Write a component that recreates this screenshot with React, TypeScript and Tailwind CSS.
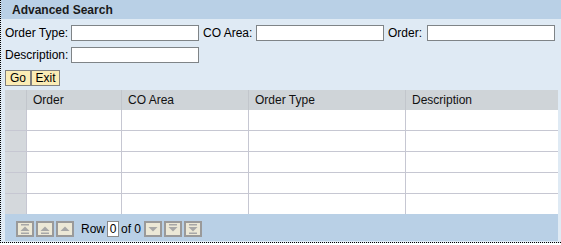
import React from 'react';

const font = "font-['Liberation_Sans',Arial,sans-serif]";

const Field = ({ label, w }: { label: string; w: string }) => (
  <>
    <span className={`${w} pl-[4px] text-[12px] leading-[16px] text-black first:pl-0`}>{label}</span>
    <input className="w-[128px] h-[16px] border border-[#7f8487] bg-white outline-none" />
  </>
);

type Dir = 'first' | 'pageUp' | 'up' | 'down' | 'pageDown' | 'last';

const NavIcon = ({ dir }: { dir: Dir }) => {
  const up = dir === 'first' || dir === 'pageUp' || dir === 'up';
  const topBar = dir === 'first' || dir === 'last' || dir === 'pageDown';
  const bottomBar = dir === 'first' || dir === 'last' || dir === 'pageUp';
  return (
    <svg width="14" height="12" viewBox="0 0 14 12">
      {topBar && <rect x="3" y="1" width="8" height="1.5" fill="#a7a7a7" />}
      {up ? (
        <polygon points="7,3.5 11.5,8 2.5,8" fill="#a7a7a7" />
      ) : (
        <polygon points="2.5,4 11.5,4 7,8.5" fill="#a7a7a7" />
      )}
      {bottomBar && <rect x="3" y="9.5" width="8" height="1.5" fill="#a7a7a7" />}
    </svg>
  );
};

const NavButton = ({ dir }: { dir: Dir }) => (
  <button className="w-[18px] h-[16px] border-2 border-[#9a9a9a] bg-[#ece8d6] flex items-center justify-center">
    <NavIcon dir={dir} />
  </button>
);

const cols = ['Order', 'CO Area', 'Order Type', 'Description'];
const gridCols = 'grid grid-cols-[22px_95px_127px_157px_152px]';

export default function App() {
  return (
    <div className={`w-[561px] h-[245px] bg-white ${font}`}>
      <div className="h-[243px] border-l border-b border-dotted border-black bg-[#dfeaf4] flex flex-col">
        <div className="h-[19px] bg-[#b9d0e6] pl-[11px] flex items-center text-[12px] font-bold text-[#1a1a1a]">
          Advanced Search
        </div>

        <div className="pl-[4px] pr-[3px] pt-[6px] flex-1 flex flex-col">
          <div className="grid grid-cols-[66px_128px_57px_128px_43px_128px] items-center">
            <Field label="Order Type:" w="w-[66px]" />
            <Field label="CO Area:" w="w-[57px]" />
            <Field label="Order:" w="w-[43px]" />
          </div>
          <div className="mt-[6px] flex items-center">
            <span className="w-[66px] text-[12px] leading-[16px]">Description:</span>
            <input className="w-[128px] h-[16px] border border-[#7f8487] bg-white outline-none" />
          </div>

          <div className="mt-[7px] flex">
            <button className="w-[26px] h-[16px] border border-[#808080] bg-[#fbecb5] text-[12px] leading-[14px] text-black">
              Go
            </button>
            <button className="w-[29px] h-[16px] border border-[#808080] bg-[#fbecb5] text-[12px] leading-[14px] text-black">
              Exit
            </button>
          </div>

          <div className="mt-[4px] flex flex-col">
            <div className={`${gridCols} h-[20px] bg-[#cfd4d8] text-[12px]`}>
              <div className="border-r border-[#c2c6cc]" />
              {cols.map((c, i) => (
                <div
                  key={c}
                  className={`pl-[6px] flex items-center text-[#111] ${i < 3 ? 'border-r border-[#c2c6cc]' : ''}`}
                >
                  {c}
                </div>
              ))}
            </div>
            {[0, 1, 2, 3, 4].map((r) => (
              <div
                key={r}
                className={`${gridCols} ${r < 4 ? 'h-[21px] border-b border-[#c6c7d2]' : 'h-[20px]'} bg-white`}
              >
                <div className="bg-[#d4d8dc] border-r border-[#c6c7d2]" />
                <div className="border-r border-[#c6c7d2]" />
                <div className="border-r border-[#c6c7d2]" />
                <div className="border-r border-[#c6c7d2]" />
                <div />
              </div>
            ))}
            <div className="h-[27px] bg-[#b9d0e6] pl-[11px] pt-[7px] flex items-start">
              <div className="flex gap-[2px]">
                <NavButton dir="first" />
                <NavButton dir="pageUp" />
                <NavButton dir="up" />
              </div>
              <div className="flex items-center h-[16px] ml-[7px] text-[12px] text-black">
                <span>Row</span>
                <span className="ml-[2px] w-[12px] h-[16px] bg-white border border-[#8a8a8a] flex items-center justify-center leading-[14px]">
                  0
                </span>
                <span className="ml-[2px]">of 0</span>
              </div>
              <div className="flex gap-[2px] ml-[3px]">
                <NavButton dir="down" />
                <NavButton dir="pageDown" />
                <NavButton dir="last" />
              </div>
            </div>
          </div>
        </div>
      </div>
    </div>
  );
}
